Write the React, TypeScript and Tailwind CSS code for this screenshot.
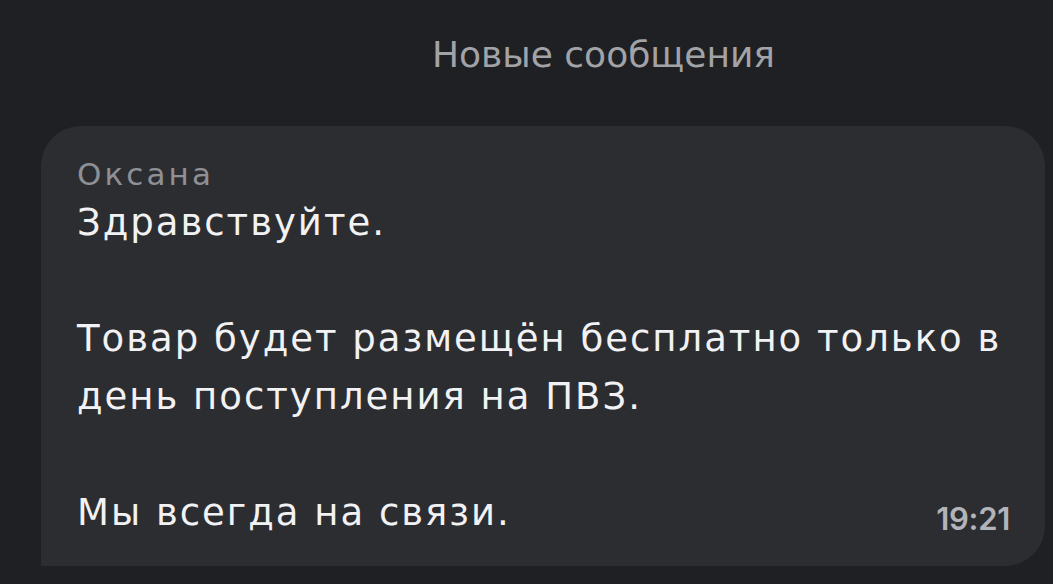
export default function App() {
  return (
    <div className="w-[1053px] h-[584px] overflow-hidden bg-[#1f2024] font-['DejaVu_Sans',sans-serif]">
      {/* Header */}
      <div className="h-[126px] pl-[432px] pt-[31px]">
        <p className="text-[36px] leading-[48px] text-[#a2a3a7]">Новые сообщения</p>
      </div>

      {/* Message bubble */}
      <div className="ml-[41px] mr-[8px] h-[440px] bg-[#2c2d31] rounded-tl-[40px] rounded-tr-[40px] rounded-br-[40px] pl-[36px] pr-[35px] pt-[28px]">
        <p className="text-[31px] leading-[40px] text-[#8f9095] tracking-[3.1px]">Оксана</p>
        <div className="text-[37px] leading-[58px] text-[#f2f2f4] tracking-[2px] whitespace-pre-line">
          {'Здравствуйте.\n\nТовар будет размещён бесплатно только в\nдень поступления на ПВЗ.'}
        </div>
        <div className="flex items-baseline justify-between mt-[58px]">
          <span className="text-[37px] leading-[58px] text-[#f2f2f4] tracking-[2px]">Мы всегда на связи.</span>
          <span className="text-[31px] leading-[58px] font-semibold text-[#b3b4b9] tracking-[-0.3px] font-['Inter',sans-serif] translate-y-[5px]">19:21</span>
        </div>
      </div>
    </div>
  );
}
